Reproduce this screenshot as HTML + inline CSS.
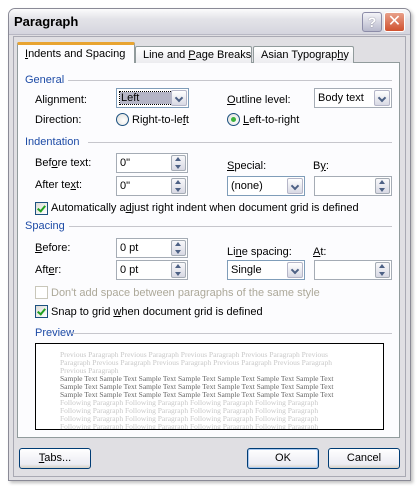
<!DOCTYPE html><html><head><meta charset="utf-8"><style>
*{margin:0;padding:0;box-sizing:border-box}
body{width:418px;height:486px;background:#fff;font-family:"Liberation Sans",sans-serif;font-size:11px;color:#000;position:relative;overflow:hidden}
.a{position:absolute;white-space:nowrap}
.win{left:8px;top:8px;width:403px;height:473px;background:#e0dfe3;border:1px solid #8a8a96;border-radius:7px 7px 0 0;box-shadow:2px 2px 3px rgba(0,0,0,.25)}
.title{left:9px;top:9px;width:401px;height:26px;border-radius:6px 6px 0 0;background:linear-gradient(#fbfbfc,#e3e3e8 40%,#d5d5de);border-bottom:1px solid #b8b8c4}
.inner{left:13px;top:36px;width:393px;height:441px;border:1px solid #a9a9b3}
.panel{left:17px;top:62px;width:383px;height:376px;background:#fcfcfe;border:1px solid #919b9c}
.tab{height:17px;border:1px solid #919b9c;border-bottom:none;background:linear-gradient(#fff,#ececf0);padding:2px 0 0 7px;border-radius:2px 2px 0 0}
.hd{color:#1d4ba6}
.ln{height:1px;background:#c6c6cc}
.box{background:#fff;border:1px solid #a5acb5;height:20px;padding:3px 0 0 3px}
.dd{position:absolute;right:1px;top:1px;width:16px;height:16px;border:1px solid #b5b6c8;background:linear-gradient(#fff,#d8d9e4);border-radius:2px}
.dd:after{content:"";position:absolute;left:4px;top:4px;width:4px;height:4px;border-right:2px solid #4d6185;border-bottom:2px solid #4d6185;transform:rotate(45deg)}
.sp{position:absolute;right:1px;top:1px;width:15px;height:16px;border:1px solid #a5acb5;background:linear-gradient(#f8f8fa,#d8d9e4);border-radius:2px}
.sp:before{content:"";position:absolute;left:3px;top:1px;border:3px solid transparent;border-bottom:4px solid #4d6185;border-top:0}
.sp:after{content:"";position:absolute;left:3px;top:9px;border:3px solid transparent;border-top:4px solid #4d6185;border-bottom:0}
.cb{width:13px;height:13px;border:1px solid #1c5180;background:linear-gradient(135deg,#dcdcd7,#fff)}
.cb.k:after{content:"";position:absolute;left:3px;top:1px;width:3px;height:6px;border-right:2px solid #21a121;border-bottom:2px solid #21a121;transform:rotate(40deg)}
.rd{width:13px;height:13px;border:1px solid #1c5180;border-radius:50%;background:radial-gradient(circle at 60% 60%,#fff,#dcdcd7)}
.btn{height:21px;border:1px solid #003c74;border-radius:3px;background:linear-gradient(#fff,#ececf3 80%,#d6d0c5);text-align:center;padding-top:3px}
.pv{font-family:"Liberation Serif",serif;font-size:7.5px;line-height:8px;color:#c8c8c8;white-space:nowrap}
u{text-decoration:underline}
</style></head><body>
<div class="a win"></div>
<div class="a title"></div>
<div class="a" style="left:14px;top:14px;font-weight:bold;font-size:13px;color:#000">Paragraph</div>
<div class="a" style="left:362px;top:12px;width:20px;height:20px;border:1px solid #8c8ca8;border-radius:3px;background:linear-gradient(#f4f4f8,#b8b9cc);color:#fff;font-weight:bold;font-size:14px;text-align:center;line-height:18px;text-shadow:0 0 1px #556">?</div>
<div class="a" style="left:384px;top:12px;width:21px;height:20px;border:1px solid #fff;border-radius:3px;background:linear-gradient(#e8a08a,#d0512f);color:#fff;font-size:16px;text-align:center;line-height:18px">✕</div>
<div class="a inner"></div>
<div class="a panel"></div>
<div class="a tab" style="left:135px;top:46px;width:117px">Line and <u>P</u>age Breaks</div>
<div class="a tab" style="left:253px;top:46px;width:101px">Asian Typograp<u>h</u>y</div>
<div class="a tab" style="left:17px;top:42px;width:118px;height:21px;background:#fcfcfe;border-top:3px solid #e8a431;padding-top:3px;z-index:2"><u>I</u>ndents and Spacing</div>

<div class="a hd" style="left:25px;top:74px">General</div><div class="a ln" style="left:68px;top:80px;width:324px"></div>
<div class="a" style="left:35px;top:94px">Ali<u>g</u>nment:</div>
<div class="a box" style="left:116px;top:88px;width:73px;border-color:#7f9db9"><span style="display:inline-block;background:#b5b5c6;outline:1px dotted #000;width:52px;padding-left:1px">Left</span><div class="dd"></div></div>
<div class="a" style="left:227px;top:94px"><u>O</u>utline level:</div>
<div class="a box" style="left:314px;top:88px;width:78px">Body text<div class="dd"></div></div>
<div class="a" style="left:35px;top:114px">Direction:</div>
<div class="a rd" style="left:116px;top:113px"></div><div class="a" style="left:132px;top:114px">Right-to-le<u>f</u>t</div>
<div class="a rd" style="left:227px;top:113px"></div><div class="a" style="left:231px;top:117px;width:5px;height:5px;border-radius:50%;background:#3cb23c"></div><div class="a" style="left:243px;top:114px"><u>L</u>eft-to-right</div>

<div class="a hd" style="left:25px;top:136px">Indentation</div><div class="a ln" style="left:88px;top:142px;width:304px"></div>
<div class="a" style="left:35px;top:157px">Bef<u>o</u>re text:</div>
<div class="a box" style="left:116px;top:153px;width:72px">0"<div class="sp"></div></div>
<div class="a" style="left:35px;top:179px">After te<u>x</u>t:</div>
<div class="a box" style="left:116px;top:176px;width:72px">0"<div class="sp"></div></div>
<div class="a" style="left:227px;top:160px"><u>S</u>pecial:</div>
<div class="a box" style="left:227px;top:176px;width:78px;border-color:#7f9db9">(none)<div class="dd"></div></div>
<div class="a" style="left:313px;top:160px">B<u>y</u>:</div>
<div class="a box" style="left:314px;top:176px;width:78px"><div class="sp"></div></div>
<div class="a cb k" style="left:35px;top:202px"></div><div class="a" style="left:51px;top:202px">Automatically a<u>d</u>just right indent when document grid is defined</div>

<div class="a hd" style="left:25px;top:220px">Spacing</div><div class="a ln" style="left:69px;top:226px;width:323px"></div>
<div class="a" style="left:35px;top:242px"><u>B</u>efore:</div>
<div class="a box" style="left:116px;top:238px;width:72px">0 pt<div class="sp"></div></div>
<div class="a" style="left:35px;top:264px">Aft<u>e</u>r:</div>
<div class="a box" style="left:116px;top:260px;width:72px">0 pt<div class="sp"></div></div>
<div class="a" style="left:227px;top:246px">Li<u>n</u>e spacing:</div>
<div class="a box" style="left:227px;top:260px;width:78px;border-color:#7f9db9">Single<div class="dd"></div></div>
<div class="a" style="left:313px;top:246px"><u>A</u>t:</div>
<div class="a box" style="left:314px;top:260px;width:78px"><div class="sp"></div></div>
<div class="a cb" style="left:35px;top:286px;border-color:#c9c7ba;background:#fff"></div><div class="a" style="left:51px;top:287px;color:#aca899">Don't add space between paragraphs of the same style</div>
<div class="a cb k" style="left:35px;top:305px"></div><div class="a" style="left:51px;top:306px">Snap to grid <u>w</u>hen document grid is defined</div>

<div class="a hd" style="left:35px;top:327px">Preview</div><div class="a ln" style="left:72px;top:333px;width:320px"></div>
<div class="a" style="left:35px;top:343px;width:349px;height:87px;border:1px solid #000;background:#fff;overflow:hidden">
<div class="pv" style="padding:7px 0 0 24px">Previous Paragraph Previous Paragraph Previous Paragraph Previous Paragraph Previous<br>Paragraph Previous Paragraph Previous Paragraph Previous Paragraph Previous Paragraph<br>Previous Paragraph<br><span style="color:#666">Sample Text Sample Text Sample Text Sample Text Sample Text Sample Text Sample Text<br>Sample Text Sample Text Sample Text Sample Text Sample Text Sample Text Sample Text<br>Sample Text Sample Text Sample Text Sample Text Sample Text Sample Text Sample Text</span><br>Following Paragraph Following Paragraph Following Paragraph Following Paragraph<br>Following Paragraph Following Paragraph Following Paragraph Following Paragraph<br>Following Paragraph Following Paragraph Following Paragraph Following Paragraph<br>Following Paragraph Following Paragraph Following Paragraph Following Paragraph</div></div>

<div class="a btn" style="left:19px;top:448px;width:72px"><u>T</u>abs...</div>
<div class="a btn" style="left:247px;top:448px;width:72px;box-shadow:inset 0 0 0 1px #a8c8f0">OK</div>
<div class="a btn" style="left:328px;top:448px;width:72px">Cancel</div>
</body></html>
